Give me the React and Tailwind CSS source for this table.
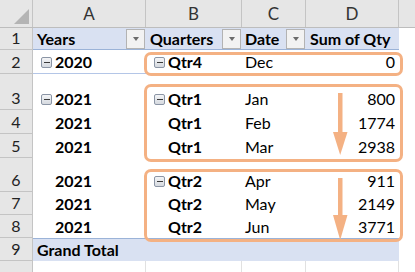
import React from 'react';

const COLS = [33, 113, 96, 64, 93];
const font = { fontFamily: 'Lato, "Open Sans", sans-serif' };

// pivot body rows
const rows = [
  { n: 2, h: 24, year: '2020', yMinus: true, qtr: 'Qtr4', qMinus: true, m: 'Dec', q: '0', line: true },
  { n: 3, h: 36, year: '2021', yMinus: true, qtr: 'Qtr1', qMinus: true, m: 'Jan', q: '800' },
  { n: 4, h: 24, year: '2021', qtr: 'Qtr1', m: 'Feb', q: '1774' },
  { n: 5, h: 24, year: '2021', qtr: 'Qtr1', m: 'Mar', q: '2938' },
  { n: 6, h: 34, year: '2021', qtr: 'Qtr2', qMinus: true, m: 'Apr', q: '911' },
  { n: 7, h: 23, year: '2021', qtr: 'Qtr2', m: 'May', q: '2149' },
  { n: 8, h: 23, year: '2021', qtr: 'Qtr2', m: 'Jun', q: '3771' },
];

function Minus() {
  return (
    <span className="mr-[3px] inline-flex h-[11px] w-[11px] items-center justify-center rounded-[2px] border border-[#8b95a5] bg-gradient-to-b from-[#f4f5f7] to-[#d5d9df]">
      <span className="h-px w-[6px] bg-[#3a3a3a]" />
    </span>
  );
}

function Drop() {
  return (
    <span className="ml-auto mr-px flex h-[20px] w-[19px] shrink-0 items-center justify-center border border-[#b3b3b3] bg-[#f2f2f2]">
      <span className="h-0 w-0 border-x-[3.5px] border-t-[4px] border-x-transparent border-t-[#6b6b6b]" />
    </span>
  );
}

function RowNum({ n, h }) {
  return (
    <div
      style={{ height: h }}
      className="flex w-[33px] shrink-0 items-end justify-center border-b border-r border-[#c4c4c4] bg-[#e6e6e6] pb-[2px] text-[16px] leading-[18px] text-[#222]"
    >
      {n}
    </div>
  );
}

export default function App() {
  return (
    <div style={font} className="relative h-[272px] w-[415px] overflow-hidden bg-white text-[16px] text-black">
      {/* column letters */}
      <div className="flex h-[28px] border-b border-[#bdbdbd] bg-[#e6e6e6]">
        <div className="relative w-[33px] shrink-0 border-r border-[#c4c4c4]">
          <span className="absolute bottom-[3px] right-[3px] h-0 w-0 border-b-[15px] border-l-[15px] border-b-[#b4b4b4] border-l-transparent" />
        </div>
        {['A', 'B', 'C', 'D'].map((c, i) => (
          <div
            key={c}
            style={{ width: COLS[i + 1] }}
            className="flex shrink-0 items-end justify-center border-r border-[#c4c4c4] pb-[3px] text-[17px] leading-[20px] text-[#333]"
          >
            {c}
          </div>
        ))}
        <div className="flex-1" />
      </div>

      {/* row 1 pivot header */}
      <div className="flex h-[22px]">
        <RowNum n={1} h={22} />
        <div className="flex w-[366px] items-center border-b border-[#9bb3d8] bg-[#d9e1f2] font-bold">
          <div className="flex w-[113px] items-center pl-[4px]">Years<Drop /></div>
          <div className="flex w-[96px] items-center pl-[4px]">Quarters<Drop /></div>
          <div className="flex w-[64px] items-center pl-[3px]">Date<Drop /></div>
          <div className="w-[93px] pl-[4px] whitespace-nowrap">Sum of Qty</div>
        </div>
      </div>

      {rows.map((r) => (
        <div key={r.n} className="flex" style={{ height: r.h }}>
          <RowNum n={r.n} h={r.h} />
          <div className={`flex w-[366px] items-end pb-[2px] leading-[18px] ${r.line ? 'border-b border-[#b4c6e7]' : ''}`}>
            <div className="flex w-[113px] items-center pl-[8px] font-bold">
              {r.yMinus ? <Minus /> : <span className="w-[14px]" />}
              {r.year}
            </div>
            <div className="flex w-[96px] items-center pl-[8px] font-bold">
              {r.qMinus ? <Minus /> : <span className="w-[14px]" />}
              {r.qtr}
            </div>
            <div className="w-[64px] pl-[3px]">{r.m}</div>
            <div className="w-[93px] pr-[4px] text-right">{r.q}</div>
          </div>
        </div>
      ))}

      {/* row 9 grand total */}
      <div className="flex h-[23px]">
        <RowNum n={9} h={23} />
        <div className="flex w-[366px] items-end border-t border-[#9bb3d8] bg-[#d9e1f2] pb-[2px] pl-[4px] font-bold leading-[18px]">
          Grand Total
        </div>
      </div>

      {/* row 10, only its top edge shows */}
      <div className="flex h-[23px]">
        <div className="h-[23px] w-[33px] shrink-0 border-r border-[#c4c4c4] bg-[#e6e6e6]" />
        {COLS.slice(1).map((w, i) => (
          <div key={i} style={{ width: w }} className="shrink-0 border-r border-[#e1e1e1]" />
        ))}
      </div>

      {/* annotation boxes */}
      <div className="absolute left-[144px] top-[52px] h-[24px] w-[259px] rounded-[7px] border-[3px] border-[#f4b183]" />
      <div className="absolute left-[144px] top-[84px] h-[78px] w-[259px] rounded-[7px] border-[3px] border-[#f4b183]" />
      <div className="absolute left-[144px] top-[169px] h-[73px] w-[259px] rounded-[7px] border-[3px] border-[#f4b183]" />

      {/* arrows */}
      <svg className="absolute left-0 top-0" width="415" height="272">
        <rect x="338" y="93" width="4.5" height="41" fill="#f4b183" />
        <polygon points="333,132 347.5,132 340.2,155" fill="#f4b183" />
        <rect x="338" y="178" width="4.5" height="39" fill="#f4b183" />
        <polygon points="333,215 347.5,215 340.2,240" fill="#f4b183" />
      </svg>
    </div>
  );
}
